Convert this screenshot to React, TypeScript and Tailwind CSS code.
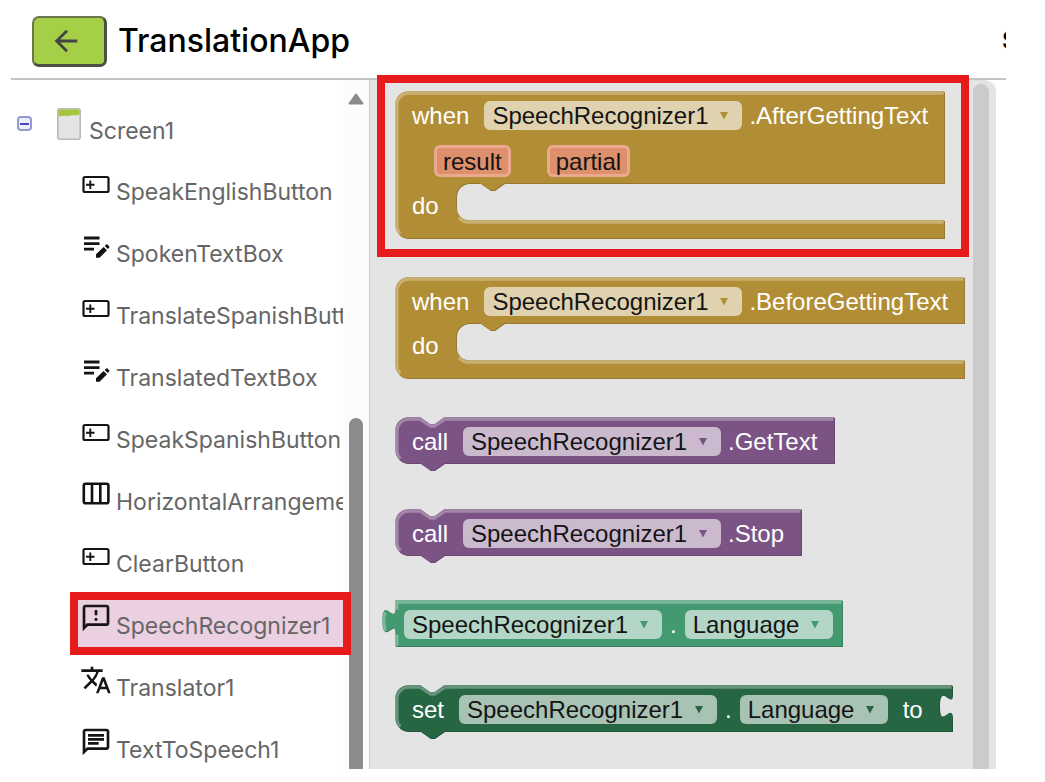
import type { ReactNode } from "react";
import { MdArrowBack, MdOutlineChat, MdOutlineFeedback, MdTranslate } from "react-icons/md";

/* ---------- component tree icons ---------- */

function ButtonIcon() {
  return (
    <svg width="32" height="32" viewBox="0 0 32 32" fill="none" stroke="#151515" aria-hidden="true">
      <rect x="3.5" y="9" width="25" height="15" rx="1.5" strokeWidth="2.200" />
      <path d="M10.300 12.500v8.500M6 16.700h8.500" strokeWidth="1.900" />
    </svg>
  );
}

function ColumnsIcon() {
  return (
    <svg width="32" height="32" viewBox="0 0 32 32" fill="none" stroke="#111" aria-hidden="true">
      <rect x="3.800" y="5.800" width="24.600" height="19.400" rx="1.800" strokeWidth="2.600" />
      <path d="M12 5.500v20M20.300 5.500v20" strokeWidth="2.600" />
    </svg>
  );
}

function TextBoxIcon() {
  return (
    <svg width="32" height="32" viewBox="0 0 32 32" aria-hidden="true">
      <path d="M4 8h15.500M4 13.600h15.500M4 19.200h10" stroke="#151515" strokeWidth="2.800" />
      <path d="M16 24.300l7.600-7.400 3.400 3.400-7.500 7.500H16zM24.700 15.900l1.300-1.200c.5-.5 1.100-.5 1.600 0l1.400 1.400c.5.500.5 1.100 0 1.600l-1.100 1.300z" fill="#111" />
    </svg>
  );
}

function ScreenIcon() {
  return (
    <svg width="24" height="32" viewBox="0 0 24 32" aria-hidden="true">
      <rect x="0.800" y="0.800" width="22.400" height="30.400" rx="2" fill="#e4e4e4" stroke="#b9b9b9" strokeWidth="1.600" />
      <path d="M1.600 1.600h20.800v5l-3 .6-4-.2-4 1-5-.3-4.800.9z" fill="#a5c63b" />
    </svg>
  );
}

type TreeItem = { name: string; icon: ReactNode; selected?: boolean };

const items: TreeItem[] = [
  { name: "SpeakEnglishButton", icon: <ButtonIcon /> },
  { name: "SpokenTextBox", icon: <TextBoxIcon /> },
  { name: "TranslateSpanishButton", icon: <ButtonIcon /> },
  { name: "TranslatedTextBox", icon: <TextBoxIcon /> },
  { name: "SpeakSpanishButton", icon: <ButtonIcon /> },
  { name: "HorizontalArrangement1", icon: <ColumnsIcon /> },
  { name: "ClearButton", icon: <ButtonIcon /> },
  { name: "SpeechRecognizer1", icon: <MdOutlineFeedback size={32} />, selected: true },
  { name: "Translator1", icon: <MdTranslate size={32} /> },
  { name: "TextToSpeech1", icon: <MdOutlineChat size={32} /> },
];

function Sidebar() {
  return (
    <nav aria-label="Components" className="flex w-[358px] shrink-0">
      <div className="w-[332px] shrink-0 pt-[22px]">
        <div className="flex h-[59px] items-center pl-1.5">
          <button
            type="button"
            aria-label="Collapse Screen1"
            className="mb-4 flex size-[15px] items-center justify-center rounded-[4px] border-2 border-[#8f9bd0] bg-[#eceefa]"
          >
            <span className="h-0.5 w-[9px] shrink-0 bg-[#4b45c8]" />
          </button>
          <span className="mb-4 ml-[25px]">
            <ScreenIcon />
          </span>
          <a href="#screen1" className="ml-2 text-[23px] text-[#666]">
            Screen1
          </a>
        </div>
        <ul>
          {items.map((item) => (
            <li key={item.name} className="relative h-[62px]">
              {item.selected && (
                <span className="absolute -top-[3px] left-[59px] z-0 h-[63px] w-[281px] border-8 border-[#e61c1c] bg-[#ebd0e1]" />
              )}
              <a href={"#" + item.name} className="relative flex h-full items-center gap-1 overflow-hidden pl-[69px]">
                <span className="mb-4 flex w-8 shrink-0 justify-center text-[#151515]">{item.icon}</span>
                <span className="text-[23px] whitespace-nowrap text-[#666]">{item.name}</span>
              </a>
            </li>
          ))}
        </ul>
      </div>
      <div className="flex grow flex-col items-center bg-[#fcfcfc] pt-[13px]">
        <svg width="16" height="12" viewBox="0 0 16 12" aria-hidden="true">
          <path d="M8 1.500L14.500 10.500H1.500z" fill="#8b8b8b" stroke="#8b8b8b" strokeWidth="2" strokeLinejoin="round" />
        </svg>
        <div className="mt-[313px] w-[14px] grow rounded-t-full bg-[#8b8b8b]" />
      </div>
    </nav>
  );
}

/* ---------- block outlines ---------- */

const TAB_DOWN = "c0,16.4 -13,-13 -13,12.300 s13,-4.100 13,12.300";
const TAB_UP = "c0,-16.4 -13,13 -13,-12.300 s13,4.100 13,-12.300";
const NOTCH_LEFT = "l-10,7 h-4 l-10,-7";
const NOTCH_RIGHT = "l10,7 h4 l10,-7";

type Outline = { body: string; light: string };

function eventOutline(w: number, top: number, bottom: number, h: number): Outline {
  return {
    body: `M0,13 a13,13 0 0 1 13,-13 H${w} V${top} H109 ${NOTCH_LEFT} H74 a13,13 0 0 0 -13,13 V${bottom - 13} a13,13 0 0 0 13,13 H${w} V${h} H13 a13,13 0 0 1 -13,-13 z`,
    light: `M${w - 1},1.500 H13 a11.500,11.500 0 0 0 -11.500,11.500 V${h - 13} a11.500,11.500 0 0 0 3.500,8 M63.500,${bottom - 3} a13,13 0 0 0 9.500,4.500 H${w - 1}`,
  };
}

function statementOutline(w: number, h: number, socket: boolean): Outline {
  const right = socket ? `V8.200 ${TAB_DOWN} V${h}` : `V${h}`;
  return {
    body: `M0,13 a13,13 0 0 1 13,-13 H25 ${NOTCH_RIGHT} H${w} ${right} H49 ${NOTCH_LEFT} H13 a13,13 0 0 1 -13,-13 z`,
    light: `M${w - 1},1.500 H49.500 l-10.500,7 h-4 l-10.500,-7 H13 a11.500,11.500 0 0 0 -11.500,11.500 V${h - 13} a11.500,11.500 0 0 0 3.500,8`,
  };
}

function valueOutline(w: number, h: number): Outline {
  return {
    body: `M0,0 H${w} V${h} H0 V32.800 ${TAB_UP} z`,
    light: `M${w - 1},1.500 H1.500 V9 M1.500,34 V${h - 1} M-10,12 c-2,3 -2,13 0,18`,
  };
}

function Shape({ w, h, outline, fill, shade }: { w: number; h: number; outline: Outline; fill: string; shade: string }) {
  return (
    <svg width={w} height={h} className="absolute top-0 left-0 overflow-visible" aria-hidden="true">
      <path d={outline.body} fill={shade} />
      <path d={outline.body} fill={fill} transform="translate(-0.700 -0.700)" />
      <path d={outline.light} fill="none" stroke="#fff" strokeOpacity="0.3" strokeWidth="3" transform="translate(-0.500 -0.300)" />
    </svg>
  );
}

/* ---------- block contents ---------- */

function Field({ value, tint, arrow }: { value: string; tint: string; arrow: string }) {
  return (
    <span className="relative inline-flex h-[29px]">
      <select
        aria-label={value}
        defaultValue={value}
        className={"h-[29px] appearance-none rounded-[6px] pr-[33px] pl-2 leading-[29px] text-[#141414] " + tint}
      >
        <option>{value}</option>
      </select>
      <svg width="8" height="8" viewBox="0 0 8 8" className={"pointer-events-none absolute top-[11px] right-3.5 " + arrow} aria-hidden="true">
        <path d="M0 0h8L4 7.500z" fill="currentColor" />
      </svg>
    </span>
  );
}

const gold = { tint: "bg-[#e0d2ae]", arrow: "text-[#b18e35]" };
const purple = { tint: "bg-[#cbbace]", arrow: "text-[#7c5385]" };
const green = { tint: "bg-[#b4d6c6]", arrow: "text-[#439970]" };
const forest = { tint: "bg-[#a8c2b4]", arrow: "text-[#266643]" };

function Param({ name }: { name: string }) {
  return <span className="flex h-8 items-center rounded-[6px] border-[3px] border-[#eba990] bg-[#de8f6c] px-1.5 text-[#141414]">{name}</span>;
}

function EventBlock({ event, params, className, w }: { event: string; params: string[]; className: string; w: number }) {
  const top = params.length ? 92 : 46;
  const bottom = top + 37;
  const h = bottom + 18;
  return (
    <div className={"relative " + className}>
      <Shape w={w} h={h} outline={eventOutline(w, top, bottom, h)} fill="#b18e35" shade="#8e722a" />
      <div className="relative flex h-[46px] items-center pl-4">
        <span className="mr-[15px]">when</span>
        <Field value="SpeechRecognizer1" {...gold} />
        <span className="ml-[7px]">.{event}</span>
      </div>
      {params.length > 0 && (
        <div className="relative flex h-[46px] items-center gap-9 pl-[38px]">
          {params.map((p) => (
            <Param key={p} name={p} />
          ))}
        </div>
      )}
      <div className="relative flex h-[42px] items-center pl-4">do</div>
    </div>
  );
}

function CallBlock({ method, w }: { method: string; w: number }) {
  return (
    <div className="relative flex h-[46px] items-center pl-4">
      <Shape w={w} h={46} outline={statementOutline(w, 46, false)} fill="#7c5385" shade="#63426a" />
      <span className="relative mr-[15px]">call</span>
      <Field value="SpeechRecognizer1" {...purple} />
      <span className="relative ml-[7px]">.{method}</span>
    </div>
  );
}

function GetterBlock() {
  return (
    <div className="relative flex h-[46px] items-center gap-2 pl-2">
      <Shape w={447} h={46} outline={valueOutline(447, 46)} fill="#439970" shade="#367a5a" />
      <Field value="SpeechRecognizer1" {...green} />
      <span className="relative">.</span>
      <Field value="Language" {...green} />
    </div>
  );
}

function SetterBlock() {
  return (
    <div className="relative flex h-[46px] items-center gap-2 pl-4">
      <Shape w={557} h={46} outline={statementOutline(557, 46, true)} fill="#266643" shade="#1e5236" />
      <span className="relative mr-[7px]">set</span>
      <Field value="SpeechRecognizer1" {...forest} />
      <span className="relative">.</span>
      <Field value="Language" {...forest} />
      <span className="relative ml-[7px]">to</span>
    </div>
  );
}

function Drawer() {
  return (
    <main className="relative mr-2.5 flex grow rounded-tr-[12px] border-l border-[#c6c6c6] bg-[#e4e4e4]">
      <div className="grow pt-3 pl-[26px] font-['Liberation_Sans',Arial,sans-serif] text-[24px] leading-[29px] whitespace-nowrap text-white">
        <EventBlock event="AfterGettingText" params={["result", "partial"]} className="h-[147px]" w={549} />
        <div className="h-[39px]" />
        <EventBlock event="BeforeGettingText" params={[]} className="h-[101px]" w={569} />
        <div className="h-[39px]" />
        <CallBlock method="GetText" w={439} />
        <div className="h-[46px]" />
        <CallBlock method="Stop" w={406} />
        <div className="h-[45px]" />
        <GetterBlock />
        <div className="h-[39px]" />
        <SetterBlock />
      </div>
      <div className="mt-1 mr-[7px] w-4 shrink-0 rounded-t-full bg-[#cbcbcb]" />
      <div className="pointer-events-none absolute -top-[5px] left-[7px] h-[182px] w-[592px] border-8 border-[#e61c1c]" />
    </main>
  );
}

export default function App() {
  return (
    <div className="flex h-screen flex-col overflow-hidden bg-white pr-[39px] pb-[13px] pl-[11px] font-[Inter,sans-serif]">
      <header className="flex h-20 shrink-0 items-center border-b-2 border-[#c4c4c4] pl-[21px]">
        <button
          type="button"
          aria-label="Back"
          className="mt-1 flex h-[51px] w-[75px] items-center justify-center rounded-[7px] border-2 border-r-[3px] border-b-[3px] border-[#4c5146] border-t-[#6c7550] border-l-[#6c7550] bg-[#a5cf47] pr-1.5 text-[#444]"
        >
          <MdArrowBack size={34} />
        </button>
        <h1 className="mt-1 ml-[11px] text-[32px] font-medium text-black">TranslationApp</h1>
        <span className="mt-1 ml-auto w-[4px] overflow-hidden text-[24px] font-semibold text-black">S</span>
      </header>
      <div className="flex min-h-0 grow">
        <Sidebar />
        <Drawer />
      </div>
    </div>
  );
}
